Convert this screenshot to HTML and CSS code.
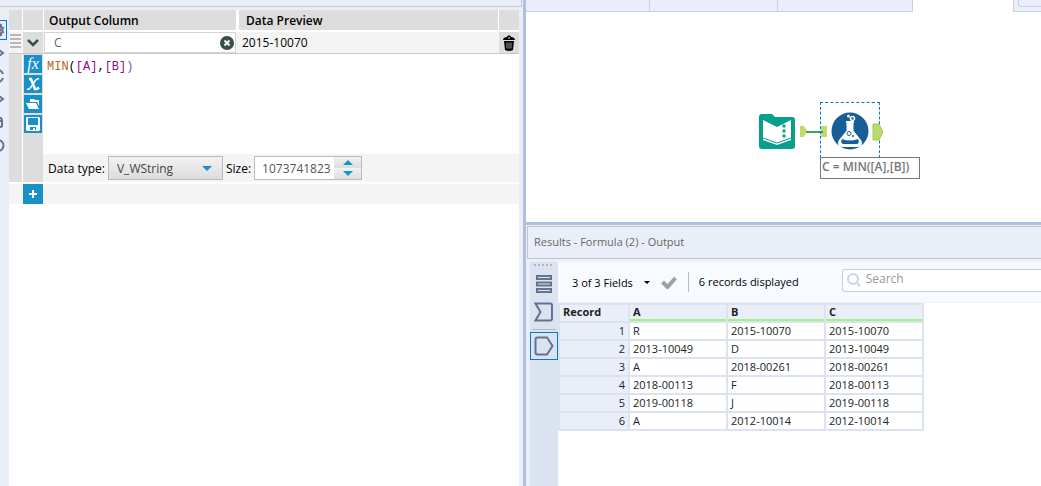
FILE: index.html
```html
<!DOCTYPE html>
<html lang="en">
<head>
    <meta charset="UTF-8">
    <title>Formula (2) - Designer</title>
    <link rel="stylesheet" href="styles.css">
</head>
<body>
    <div class="app">
        <section class="config">
            <div class="config-title"></div>
            <div class="config-body">
                <nav class="config-nav">
                    <button class="nav-btn active" aria-label="Configuration"><svg width="6" height="18" viewBox="0 0 6 18"><path d="M-1 3l2 1v2l2 1-1 2 1 2-2 1v2l-2 1M-2 7a2 2 0 0 1 0 4" /></svg></button>
                    <button class="nav-btn" aria-label="Navigation"><svg width="6" height="18" viewBox="0 0 6 18"><path d="M-1 6l4 3-4 3" /></svg></button>
                    <button class="nav-btn" aria-label="Refresh"><svg width="6" height="18" viewBox="0 0 6 18"><path d="M-1 3q3 1 4 4M-1 15q3-1 4-4" /></svg></button>
                    <button class="nav-btn" aria-label="XML view"><svg width="6" height="18" viewBox="0 0 6 18"><path d="M-1 6l4 3-4 3" /></svg></button>
                    <button class="nav-btn" aria-label="Annotation"><svg width="6" height="18" viewBox="0 0 6 18"><path d="M-1 5h2l1 2v6q0 1-3 1M-1 8h3" /></svg></button>
                    <button class="nav-btn" aria-label="Help"><svg width="6" height="18" viewBox="0 0 6 18"><path d="M-2 4a5 5 0 0 1 0 11" /></svg></button>
                </nav>
                <div class="config-main">
                    <div class="row head">
                        <span class="grip"></span>
                        <span class="toggle"></span>
                        <span class="output">Output Column</span>
                        <span class="preview">Data Preview</span>
                        <span class="trash"></span>
                    </div>
                    <div class="row field">
                        <span class="grip"><i></i><i></i><i></i><i></i></span>
                        <button class="toggle" aria-label="Collapse"><svg width="14" height="8" viewBox="0 0 14 8"><path d="M2 1l5 5 5-5" fill="none" stroke="#33504b" stroke-width="2.500" /></svg></button>
                        <span class="output">
                            <input type="text" value="C" aria-label="Output column name">
                            <button class="clear" aria-label="Clear"><svg width="14" height="14" viewBox="0 0 14 14"><circle cx="7" cy="7" r="7" fill="#33504b" /><path d="M4.500 4.500l5 5M9.500 4.500l-5 5" stroke="#fff" stroke-width="2" /></svg></button>
                        </span>
                        <span class="preview">2015-10070</span>
                        <button class="trash" aria-label="Delete"><svg width="12" height="16" viewBox="0 0 12 16"><path d="M4 2c0-2 4-2 4 0 2 0 4 1 4 3H0c0-2 2-3 4-3zM1 6h10l-1 9q-4 2-8 0z" /><path d="M4 7.500v6M6 7.500v6M8 7.500v6" stroke="#ddd" stroke-width=".7" /><path d="M4.500 2.500h3L6 4z" fill="#ddd" /></svg></button>
                    </div>
                    <div class="editor">
                        <span class="grip"></span>
                        <div class="tools">
                            <button class="tool fx" aria-label="Functions">fx</button>
                            <button class="tool" aria-label="Variables"><svg width="14" height="14" viewBox="0 0 14 14" fill="none" stroke="#fff"><path d="M3 2h2l4 10h2l2-1.500" stroke-width="2.500" /><path d="M13 2q-2-1-4 2l-4 6q-2 3-4 2" stroke-width="1.500" /></svg></button>
                            <button class="tool" aria-label="Open expression"><svg width="14" height="12" viewBox="0 0 14 12"><path d="M4 1h4l1 1h4v6l-2-4H4zM0 5h10l3 6H3z" fill="#fff" /></svg></button>
                            <button class="tool" aria-label="Save expression"><svg width="14" height="14" viewBox="0 0 14 14"><path d="M1 0h12l1 1v12l-1 1H1l-1-1V1z" fill="#fff" /><path d="M2 1h10v7H2zM4 10h6v3H4z" fill="#1891c9" /><path d="M7 11h2v2H7z" fill="#fff" /></svg></button>
                        </div>
                        <div class="expr">
                            <code class="code"><span class="fn">MIN</span>(<span class="col">[A]</span>,<span class="col">[B]</span><span class="paren">)</span></code>
                            <div class="type-row">
                                <label for="dataType">Data type:</label>
                                <span class="select">
                                    <select id="dataType"><option>V_WString</option></select>
                                    <svg width="10" height="5" viewBox="0 0 10 5"><path d="M0 0h10L5 5z" /></svg>
                                </span>
                                <label for="size">Size:</label>
                                <span class="spin">
                                    <input type="text" id="size" value="1073741823">
                                    <span class="spin-btns">
                                        <button aria-label="Increase"><svg width="10" height="5" viewBox="0 0 10 5"><path d="M0 5h10L5 0z" /></svg></button>
                                        <button aria-label="Decrease"><svg width="10" height="5" viewBox="0 0 10 5"><path d="M0 0h10L5 5z" /></svg></button>
                                    </span>
                                </span>
                            </div>
                        </div>
                    </div>
                    <div class="add-row"><button class="add" aria-label="Add column"><svg width="8" height="8" viewBox="0 0 8 8"><path d="M4 0v8M0 4h8" stroke="#fff" stroke-width="2" /></svg></button></div>
                </div>
            </div>
        </section>

        <div class="workspace">
            <div class="tabs">
                <button class="tab t1" aria-label="Workflow 1"></button>
                <button class="tab t2" aria-label="Workflow 2"></button>
                <button class="tab t3" aria-label="Workflow 3"></button>
                <button class="tab current" aria-label="Current workflow"></button>
                <span class="tab-rest"><button class="new-tab" aria-label="New tab"></button></span>
            </div>
            <main class="canvas">
                <svg class="node input-node" width="38" height="38" viewBox="0 0 38 38">
                    <path d="M1 5q0-3 3-3h10l3 3h17q3 0 3 3v26q0 3-3 3H4q-3 0-3-3z" fill="#07a08c" />
                    <path d="M5 8l14 7v18L5 28zM33 8l-14 7v18l14-5z" fill="#fff" />
                    <path d="M5 26l14 5 14-5" fill="none" stroke="#07a08c" />
                    <g fill="#07a08c"><circle cx="26" cy="14" r="1.700" /><circle cx="26" cy="19" r="1.700" /><circle cx="26" cy="24" r="1.700" /></g>
                </svg>
                <svg class="node wire" width="30" height="12" viewBox="0 0 30 12">
                    <path d="M1 0h4l3 5-3 6H1zM22 0h6v11h-6z" fill="#c0dc68" />
                    <path d="M7 6h17" stroke="#3ba558" stroke-width="2" />
                </svg>
                <div class="node selection">
                    <svg width="38" height="38" viewBox="0 0 38 38">
                        <circle cx="19" cy="19" r="18.500" fill="#175d98" />
                        <path d="M15 10h8M16.500 11v8L8.500 29q-2 5 3 5h15q5 0 3-5l-8-10v-8z" fill="#fff" stroke="#fff" stroke-width="2" />
                        <path d="M11 27q8 3 16 0 2 4-1 5H12q-3-1-1-5z" fill="#175d98" />
                        <circle cx="18" cy="21.500" r="2" fill="none" stroke="#175d98" /><circle cx="22" cy="24" r="1" fill="#175d98" />
                        <circle cx="17.500" cy="4" r="1.500" fill="#fff" /><circle cx="21.500" cy="6.500" r="2" fill="none" stroke="#fff" stroke-width="1.500" />
                    </svg>
                </div>
                <svg class="node out-anchor" width="12" height="18" viewBox="0 0 12 18"><path d="M1 1h6l4 8-4 8H1z" fill="#b9dc69" stroke="#a3cb52" /></svg>
                <div class="node annotation">C = MIN([A],[B])</div>
            </main>

            <section class="results">
                <h2>Results - Formula (2) - Output</h2>
                <div class="results-body">
                    <nav class="results-nav">
                        <span class="dots"></span>
                        <button aria-label="Messages"><svg width="18" height="20" viewBox="0 0 18 20"><path d="M2 2h14v3H2zM2 8.500h14v3H2zM2 15h14v3H2z" /></svg></button>
                        <button aria-label="Input anchor"><svg width="20" height="20" viewBox="0 0 20 20"><path d="M1.500 1.500H16q2 0 2 2v13q0 2-2 2H1.500l5-8.500z" /></svg></button>
                        <hr>
                        <button class="selected" aria-label="Output anchor"><svg width="20" height="20" viewBox="0 0 20 20"><path d="M3.500 1.500H13l5.500 8.500-5.500 8.500H3.500q-2 0-2-2v-13q0-2 2-2z" /></svg></button>
                    </nav>
                    <div class="results-main">
                        <div class="toolbar">
                            <button class="fields">3 of 3 Fields <svg width="6" height="3" viewBox="0 0 6 3"><path d="M0 0h6L3 3z" /></svg></button>
                            <button class="apply" aria-label="Apply"><svg width="16" height="13" viewBox="0 0 16 13"><path d="M1.500 6l5 5L14.500 2" fill="none" stroke="#a0a0a0" stroke-width="4" /></svg></button>
                            <span class="count">6 records displayed</span>
                            <label class="search">
                                <svg width="14" height="14" viewBox="0 0 14 14"><circle cx="6" cy="6" r="5" /><path d="M10 10l3 3" /></svg>
                                <input type="text" placeholder="Search" aria-label="Search">
                            </label>
                        </div>
                        <table>
                            <thead>
                                <tr><th class="rec">Record</th><th>A</th><th>B</th><th>C</th></tr>
                            </thead>
                            <tbody>
                                <tr><td class="rec">1</td><td>R</td><td>2015-10070</td><td>2015-10070</td></tr>
                                <tr><td class="rec">2</td><td>2013-10049</td><td>D</td><td>2013-10049</td></tr>
                                <tr><td class="rec">3</td><td>A</td><td>2018-00261</td><td>2018-00261</td></tr>
                                <tr><td class="rec">4</td><td>2018-00113</td><td>F</td><td>2018-00113</td></tr>
                                <tr><td class="rec">5</td><td>2019-00118</td><td>J</td><td>2019-00118</td></tr>
                                <tr><td class="rec">6</td><td>A</td><td>2012-10014</td><td>2012-10014</td></tr>
                            </tbody>
                        </table>
                    </div>
                </div>
            </section>
        </div>
    </div>
</body>
</html>
```
FILE: styles.css
```css
* {
    box-sizing: border-box;
}
body {
    margin: 0;
    font-family: "Open Sans", "Noto Sans", sans-serif;
    font-size: 12px;
    color: #000;
    background: #fff;
}
button, input, select {
    font: inherit;
    color: inherit;
    margin: 0;
    padding: 0;
    border: none;
    border-radius: 0;
    background: none;
}
svg {
    display: block;
    flex: none;
}
.app {
    display: flex;
    height: 100vh;
    overflow: hidden;
}

/* configuration panel */
.config {
    display: flex;
    flex-direction: column;
    flex: 1 1 0;
    background: #eaeef9;
    padding-right: 1px;
    border-right: 3px solid #b0bfdf;
}
.config-title {
    height: 7px;
    border: solid #c8c8c8;
    border-width: 0 1px 1px 0;
}
.config-body {
    flex: 1;
    display: flex;
    padding: 3px 3px 0 0;
}
.config-nav {
    width: 9px;
    padding-top: 10px;
    display: flex;
    flex-direction: column;
    gap: 3px;
}
.nav-btn {
    width: 7px;
    height: 20px;
    display: flex;
    align-items: center;
}
.nav-btn.active {
    border: 1px solid #0078d7;
    border-left: none;
}
.nav-btn path {
    fill: none;
    stroke: #65718f;
    stroke-width: 2;
}
.config-main {
    flex: 1;
    background: #fff;
}
.row {
    display: flex;
    height: 20px;
    line-height: 20px;
}
.grip {
    width: 13px;
    margin-right: 1px;
    background: #ddd;
}
.toggle, .trash {
    width: 20px;
    background: #ddd;
    display: flex;
    align-items: center;
    justify-content: center;
}
.toggle {
    margin-right: 1px;
}
.trash {
    margin-left: 1px;
}
.output {
    width: 192px;
    margin-right: 3px;
}
.preview {
    flex: 1;
}
.head {
    font-weight: 600;
    line-height: 22px;
}
.head .output, .head .preview {
    background: #ddd;
    padding-left: 5px;
}
.head .preview {
    padding-left: 7px;
}
.field {
    height: 22px;
    line-height: 22px;
    margin-top: 2px;
    border-bottom: 1px solid #c8c8c8;
    background: #f4f4f4;
}
.field .grip {
    display: flex;
    flex-direction: column;
    gap: 2px;
    padding: 2px 1px;
    background: #f4f4f4;
}
.field .grip i {
    height: 2px;
    background: #b8b8b8;
}
.field .output {
    display: flex;
    align-items: center;
    background: #fff;
    border: 1px solid #d4d4d4;
    padding: 0 1px 0 9px;
}
.field .output input {
    flex: 1;
    min-width: 0;
    color: #666;
}
.field .preview {
    padding-left: 3px;
}

.editor {
    display: flex;
    height: 128px;
    margin-bottom: 2px;
}
.tools {
    width: 20px;
    padding: 1px;
    background: #ddd;
    display: flex;
    flex-direction: column;
    gap: 2px;
}
.tool {
    height: 18px;
    display: flex;
    align-items: center;
    justify-content: center;
    background: #1891c9;
    color: #fff;
}
.fx {
    font-family: "Liberation Serif", serif;
    font-style: italic;
    font-size: 16px;
    line-height: 16px;
}
.expr {
    flex: 1;
    display: flex;
    flex-direction: column;
}
.code {
    flex: 1;
    padding: 4px;
    font-family: "Liberation Mono", monospace;
    font-size: 12px;
    line-height: 18px;
}
.fn {
    color: #b5651d;
}
.col {
    color: #8b108b;
}
.paren {
    color: #6a5acd;
}
.type-row {
    display: flex;
    align-items: center;
    gap: 3px;
    height: 28px;
    padding-left: 5px;
    background: #f4f4f4;
}
.select {
    position: relative;
    width: 115px;
    height: 24px;
    border: 1px solid #bbb;
    background: linear-gradient(#f2f2f2, #ddd);
    color: #444;
}
.select select {
    width: 100%;
    height: 100%;
    padding-left: 8px;
    appearance: none;
}
.select svg {
    position: absolute;
    right: 10px;
    top: 9px;
    pointer-events: none;
}
.select path, .spin path {
    fill: #1891c9;
}
.spin {
    display: flex;
    width: 108px;
    height: 24px;
    border: 1px solid #bbb;
    background: #fff;
}
.spin input {
    flex: 1;
    min-width: 0;
    padding-left: 7px;
    color: #555;
}
.spin-btns {
    width: 27px;
    display: flex;
    flex-direction: column;
}
.spin-btns button {
    flex: 1;
    display: flex;
    align-items: center;
    justify-content: center;
    background: linear-gradient(#f2f2f2, #ddd);
}
.add-row {
    height: 20px;
    padding-left: 14px;
    background: #f4f4f4;
}
.add {
    width: 20px;
    height: 20px;
    display: flex;
    align-items: center;
    justify-content: center;
    background: #1891c9;
}

/* workflow canvas */
.workspace {
    width: 515px;
    display: flex;
    flex-direction: column;
}
.tabs {
    display: flex;
    height: 12px;
}
.tab {
    border-right: 1px solid #c8d0e6;
    border-bottom: 1px solid #c8d0e6;
    background: #eaeef9;
}
.t1 {
    width: 124px;
}
.t2 {
    width: 128px;
}
.t3 {
    width: 135px;
}
.current {
    width: 100px;
    border: none;
    background: #fff;
}
.tab-rest {
    flex: 1;
    padding-left: 4px;
    background: #eaeef9;
    border-left: 1px solid #c8d0e6;
    border-bottom: 1px solid #c8d0e6;
}
.new-tab {
    display: block;
    width: 100%;
    height: 7px;
    border: solid #c3cfe6;
    border-width: 0 0 1px 1px;
    border-radius: 0 0 0 3px;
}
.canvas {
    position: relative;
    height: 210px;
}
.node {
    position: absolute;
}
.input-node {
    left: 232px;
    top: 100px;
}
.wire {
    left: 273px;
    top: 114px;
}
.selection {
    left: 294px;
    top: 90px;
    width: 60px;
    height: 56px;
    padding: 9px 10px;
    border: 1px dashed #0078d7;
    border-bottom: none;
}
.out-anchor {
    left: 346px;
    top: 111px;
}
.annotation {
    left: 294px;
    top: 145px;
    width: 100px;
    height: 22px;
    border: 1px solid #777;
    background: #fff;
    color: #777;
    font-size: 12px;
    font-weight: 600;
    line-height: 18px;
    padding-left: 1px;
    white-space: nowrap;
}

/* results */
.results {
    flex: 1;
    display: flex;
    flex-direction: column;
    border-top: 3px solid #b0bfdf;
    background: #eaeef9;
}
.results h2 {
    height: 33px;
    margin: 1px 0 3px 1px;
    padding-left: 6px;
    border: 1px solid #c4c4c4;
    border-right: none;
    font-size: 11px;
    font-weight: normal;
    line-height: 30px;
    color: #666;
}
.results-body {
    flex: 1;
    display: flex;
    padding-left: 4px;
}
.results-nav {
    width: 28px;
    background: #dbe2f0;
    display: flex;
    flex-direction: column;
    align-items: center;
}
.dots {
    width: 20px;
    height: 2px;
    margin: 2px 0 4px;
    background: repeating-linear-gradient(90deg, #b0b4bc 0 2px, transparent 2px 4px);
}
.results-nav button {
    width: 28px;
    height: 28px;
    display: flex;
    align-items: center;
    justify-content: center;
}
.results-nav path {
    fill: none;
    stroke: #65718f;
    stroke-width: 2;
}
.results-nav hr {
    width: 24px;
    margin: 3px 0 2px;
    border: none;
    border-top: 1px solid #b8b8b8;
}
.results-nav .selected {
    border: 1px solid #0078d7;
}
.results-main {
    flex: 1;
    min-width: 0;
    background: #fff;
}
.toolbar {
    display: flex;
    align-items: center;
    height: 41px;
    padding-left: 14px;
    background: #f7faff;
    border-bottom: 1px solid #eef1f8;
    font-size: 11px;
}
.fields {
    display: flex;
    align-items: center;
    gap: 11px;
}
.apply {
    margin: 0 11px;
}
.count {
    line-height: 20px;
    padding-left: 10px;
    border-left: 1px solid #bbb;
}
.search {
    flex: 1;
    height: 23px;
    margin: 0 0 4px 43px;
    display: flex;
    align-items: center;
    gap: 5px;
    padding-left: 4px;
    background: #fff;
    border: 1px solid #c3cfe6;
    border-right: none;
    border-radius: 3px 0 0 3px;
    font-size: 12px;
}
.search svg {
    fill: none;
    stroke: #c8d3ea;
    stroke-width: 2;
}
.search input {
    flex: 1;
    min-width: 0;
    height: 18px;
    align-self: flex-start;
}
.search input::placeholder {
    color: #999;
    opacity: 1;
}
table {
    border-collapse: separate;
    border-spacing: 2px;
    table-layout: fixed;
    width: 366px;
    background: #dbe2f0;
    font-size: 11px;
    line-height: 16px;
}
th, td {
    height: 16px;
    padding: 0 3px;
    background: #fff;
    text-align: left;
    color: #222;
}
th {
    border-bottom: 2px solid #9bf77b;
    background: #eaeef9;
    font-weight: bold;
    line-height: 14px;
}
.rec {
    width: 68px;
    background: #eaeef9;
}
th.rec {
    border-bottom-color: #eaeef9;
}
td.rec {
    text-align: right;
}
```
